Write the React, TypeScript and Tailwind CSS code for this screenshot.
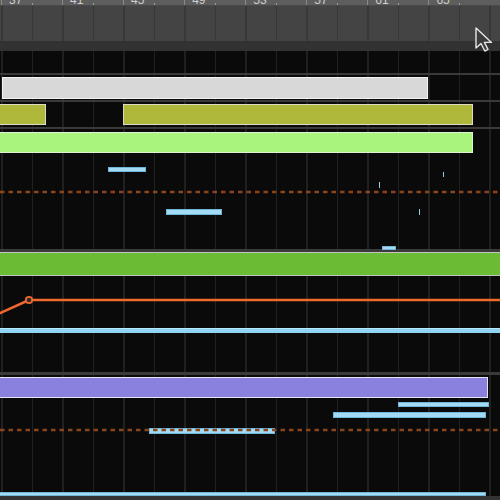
import React from 'react';

const GRID = Array.from({ length: 17 }, (_, i) => 1 + i * 30.53);
const BARS = ['37', '41', '45', '49', '53', '57', '61', '65'];

type Box = { x: number; w: number; y: number; h: number; cls: string };

function GridLines({ tone }: { tone: string }) {
  return (
    <div className="absolute inset-0 pointer-events-none">
      {GRID.map((x) => (
        <div key={x} className={`absolute top-0 bottom-0 w-[1.5px] ${tone}`} style={{ left: x }} />
      ))}
    </div>
  );
}

function Boxes({ items }: { items: Box[] }) {
  return (
    <>
      {items.map((b, i) => (
        <div
          key={i}
          className={`absolute ${b.cls}`}
          style={{ left: b.x, width: b.w, top: b.y, height: b.h }}
        />
      ))}
    </>
  );
}

function Dashed({ y }: { y: number }) {
  return (
    <svg className="absolute left-0 w-[500px] h-[4px]" style={{ top: y - 1.5 }} viewBox="0 0 500 4">
      <line x1="0" y1="2" x2="500" y2="2" stroke="#8a451b" strokeWidth="2.5" strokeDasharray="4.5 4" />
    </svg>
  );
}

function Separator({ h = 'h-[2px]' }: { h?: string }) {
  return <div className={`${h} bg-[#3a3a3a] shrink-0`} />;
}

const note = 'bg-[#a3dbf5] border border-[#6fb6d9]';

export default function App() {
  return (
    <div className="relative w-[500px] h-[500px] overflow-hidden bg-[#0a0a0a] flex flex-col font-['Liberation_Sans',Arial,sans-serif]">
      {/* Ruler */}
      <div className="relative h-[6px] shrink-0 bg-[#5e5e5e] border-b border-[#4a4a4a] overflow-hidden">
        {BARS.map((label, i) => (
          <React.Fragment key={label}>
            <div className="absolute top-0 h-[6px] w-px bg-[#8a8a8a]" style={{ left: GRID[i * 2] }} />
            <div className="absolute bottom-0 h-[2px] w-px bg-[#9a9a9a]" style={{ left: GRID[i * 2 + 1] }} />
            <span
              className="absolute top-[-6px] text-[12px] leading-none text-[#cfcfcf]"
              style={{ left: GRID[i * 2] + 8 }}
            >
              {label}
            </span>
          </React.Fragment>
        ))}
      </div>
      <div className="relative h-[35px] shrink-0 bg-[#444444]">
        <GridLines tone="bg-[#383838]" />
      </div>
      <div className="h-[10px] shrink-0 bg-[#323232]" />

      {/* Track 1 */}
      <div className="relative h-[22px] shrink-0">
        <GridLines tone="bg-[#202020]" />
      </div>
      <Separator />

      {/* Track 2 */}
      <div className="relative h-[25px] shrink-0">
        <GridLines tone="bg-[#202020]" />
        <Boxes items={[{ x: 2, w: 426, y: 2, h: 22, cls: 'bg-[#d8d8d8] border border-[#f2f2f2]' }]} />
      </div>
      <Separator />

      {/* Track 3 */}
      <div className="relative h-[25px] shrink-0">
        <GridLines tone="bg-[#202020]" />
        <Boxes
          items={[
            { x: -2, w: 48, y: 2, h: 21, cls: 'bg-[#b0b83b] border border-[#dcdcc4]' },
            { x: 123, w: 350, y: 2, h: 21, cls: 'bg-[#b0b83b] border border-[#dcdcc4]' },
          ]}
        />
      </div>
      <Separator />

      {/* Track 4 with expanded notes */}
      <div className="relative h-[120px] shrink-0">
        <GridLines tone="bg-[#202020]" />
        <Boxes
          items={[
            { x: -2, w: 475, y: 2.5, h: 21, cls: 'bg-[#a9f47c] border border-[#dcf2d4]' },
            { x: 108, w: 38, y: 37.5, h: 5.5, cls: note },
            { x: 378.5, w: 1.5, y: 53, h: 6, cls: 'bg-[#8fd0ee]' },
            { x: 442.5, w: 1.5, y: 43, h: 5, cls: 'bg-[#8fd0ee]' },
            { x: 166, w: 56, y: 80, h: 5.5, cls: note },
            { x: 418.5, w: 1.5, y: 80, h: 5.5, cls: 'bg-[#8fd0ee]' },
            { x: 382, w: 14, y: 116.5, h: 4, cls: note },
          ]}
        />
        <Dashed y={62} />
      </div>
      <Separator h="h-[3px]" />

      {/* Track 5 with automation */}
      <div className="relative h-[120px] shrink-0">
        <GridLines tone="bg-[#202020]" />
        <Boxes
          items={[
            { x: -2, w: 504, y: 0, h: 24, cls: 'bg-[#6cbb35] border-y-[1.5px] border-[#c4c4c4]' },
            { x: -2, w: 504, y: 75.5, h: 5.5, cls: 'bg-[#8fd4f2] border-t border-[#b8e6fa]' },
          ]}
        />
        <svg className="absolute left-0 top-0 w-[500px] h-[120px]" viewBox="0 0 500 120">
          <polyline points="-2,62 29,48 502,48" fill="none" stroke="#f0692c" strokeWidth="2.5" />
          <circle cx="29" cy="48" r="3.2" fill="#2a2a2a" stroke="#f0692c" strokeWidth="1.8" />
        </svg>
      </div>
      <Separator h="h-[3px]" />

      {/* Track 6 */}
      <div className="relative h-[121px] shrink-0">
        <GridLines tone="bg-[#202020]" />
        <Boxes
          items={[
            { x: -2, w: 490, y: 2, h: 20.5, cls: 'bg-[#8a80de] border border-[#e6e4f4]' },
            { x: 398, w: 91, y: 27, h: 4.5, cls: note },
            { x: 333, w: 153, y: 37, h: 5.5, cls: note },
            { x: 149, w: 126, y: 53, h: 5.5, cls: note },
            { x: -2, w: 488, y: 117, h: 4, cls: note },
          ]}
        />
        <Dashed y={54} />
      </div>
      <div className="flex-1 bg-[#333333]" />

      {/* Mouse pointer */}
      <svg className="absolute left-[474px] top-[27px] w-[20px] h-[26px]" viewBox="0 0 20 26">
        <path
          d="M2 1 L2 21 L7 16.5 L10.8 24 L14 22.4 L10.4 15.4 L17.5 15.4 Z"
          fill="#3c3c3c"
          stroke="#e6e6e6"
          strokeWidth="1.4"
          strokeLinejoin="round"
        />
      </svg>
    </div>
  );
}
